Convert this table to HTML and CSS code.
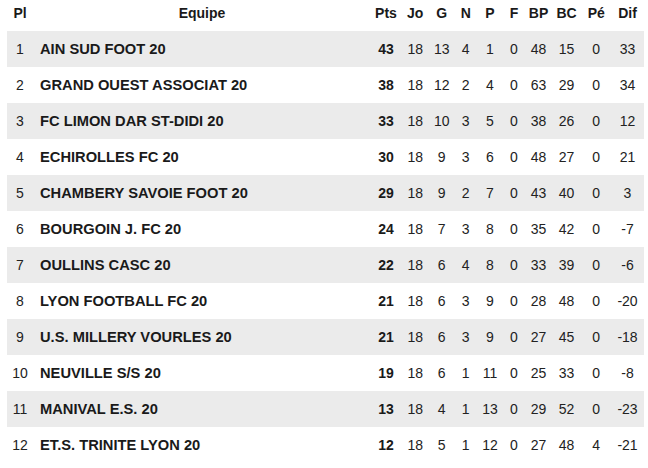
FILE: index.html
```html
<!DOCTYPE html>
<html lang="fr">
<head>
<meta charset="utf-8">
<title>Classement</title>
<link rel="stylesheet" href="styles.css">
</head>
<body>
<table class="standings">
  <colgroup>
    <col class="c-pl"><col class="c-team"><col class="c-pts"><col class="c-jo"><col class="c-g"><col class="c-n"><col class="c-p"><col class="c-f"><col class="c-bp"><col class="c-bc"><col class="c-pe"><col class="c-dif">
  </colgroup>
  <thead>
    <tr><th>Pl</th><th>Equipe</th><th>Pts</th><th>Jo</th><th>G</th><th>N</th><th>P</th><th>F</th><th>BP</th><th>BC</th><th>Pé</th><th>Dif</th></tr>
  </thead>
  <tbody>
    <tr><td>1</td><td class="team">AIN SUD FOOT 20</td><td class="pts">43</td><td>18</td><td>13</td><td>4</td><td>1</td><td>0</td><td>48</td><td>15</td><td>0</td><td>33</td></tr>
    <tr><td>2</td><td class="team">GRAND OUEST ASSOCIAT 20</td><td class="pts">38</td><td>18</td><td>12</td><td>2</td><td>4</td><td>0</td><td>63</td><td>29</td><td>0</td><td>34</td></tr>
    <tr><td>3</td><td class="team">FC LIMON DAR ST-DIDI 20</td><td class="pts">33</td><td>18</td><td>10</td><td>3</td><td>5</td><td>0</td><td>38</td><td>26</td><td>0</td><td>12</td></tr>
    <tr><td>4</td><td class="team">ECHIROLLES FC 20</td><td class="pts">30</td><td>18</td><td>9</td><td>3</td><td>6</td><td>0</td><td>48</td><td>27</td><td>0</td><td>21</td></tr>
    <tr><td>5</td><td class="team">CHAMBERY SAVOIE FOOT 20</td><td class="pts">29</td><td>18</td><td>9</td><td>2</td><td>7</td><td>0</td><td>43</td><td>40</td><td>0</td><td>3</td></tr>
    <tr><td>6</td><td class="team">BOURGOIN J. FC 20</td><td class="pts">24</td><td>18</td><td>7</td><td>3</td><td>8</td><td>0</td><td>35</td><td>42</td><td>0</td><td>-7</td></tr>
    <tr><td>7</td><td class="team">OULLINS CASC 20</td><td class="pts">22</td><td>18</td><td>6</td><td>4</td><td>8</td><td>0</td><td>33</td><td>39</td><td>0</td><td>-6</td></tr>
    <tr><td>8</td><td class="team">LYON FOOTBALL FC 20</td><td class="pts">21</td><td>18</td><td>6</td><td>3</td><td>9</td><td>0</td><td>28</td><td>48</td><td>0</td><td>-20</td></tr>
    <tr><td>9</td><td class="team">U.S. MILLERY VOURLES 20</td><td class="pts">21</td><td>18</td><td>6</td><td>3</td><td>9</td><td>0</td><td>27</td><td>45</td><td>0</td><td>-18</td></tr>
    <tr><td>10</td><td class="team">NEUVILLE S/S 20</td><td class="pts">19</td><td>18</td><td>6</td><td>1</td><td>11</td><td>0</td><td>25</td><td>33</td><td>0</td><td>-8</td></tr>
    <tr><td>11</td><td class="team">MANIVAL E.S. 20</td><td class="pts">13</td><td>18</td><td>4</td><td>1</td><td>13</td><td>0</td><td>29</td><td>52</td><td>0</td><td>-23</td></tr>
    <tr><td>12</td><td class="team">ET.S. TRINITE LYON 20</td><td class="pts">12</td><td>18</td><td>5</td><td>1</td><td>12</td><td>0</td><td>27</td><td>48</td><td>4</td><td>-21</td></tr>
  </tbody>
</table>
</body>
</html>
```
FILE: styles.css
```css
html, body {
  margin: 0;
  padding: 0;
  background: #ffffff;
}

.standings {
  margin-left: 7px;
  width: 637px;
  border-collapse: collapse;
  table-layout: fixed;
  font-family: "Liberation Sans", Arial, sans-serif;
  font-size: 14px;
  line-height: 16px;
  color: #222222;
}

.c-pl { width: 26px; }
.c-team { width: 338px; }
.c-pts { width: 30px; }
.c-jo { width: 28.5px; }
.c-g { width: 24.5px; }
.c-n { width: 23.5px; }
.c-p { width: 25px; }
.c-f { width: 23px; }
.c-bp { width: 26px; }
.c-bc { width: 30px; }
.c-pe { width: 29.5px; }
.c-dif { width: 33px; }

.standings th {
  height: 31px;
  padding: 5px 0 0;
  box-sizing: border-box;
  vertical-align: top;
  text-align: center;
  font-weight: bold;
  color: #1a1a1a;
  white-space: nowrap;
}

.standings td {
  height: 36px;
  padding: 0;
  box-sizing: border-box;
  vertical-align: middle;
  text-align: center;
  white-space: nowrap;
}

.standings tbody tr:nth-child(odd) {
  background: #ebebeb;
}

.standings td.team {
  text-align: left;
  padding-left: 7px;
  font-size: 14.7px;
  font-weight: bold;
  color: #1a1a1a;
}

.standings td.pts {
  font-weight: bold;
  color: #1a1a1a;
}
```
